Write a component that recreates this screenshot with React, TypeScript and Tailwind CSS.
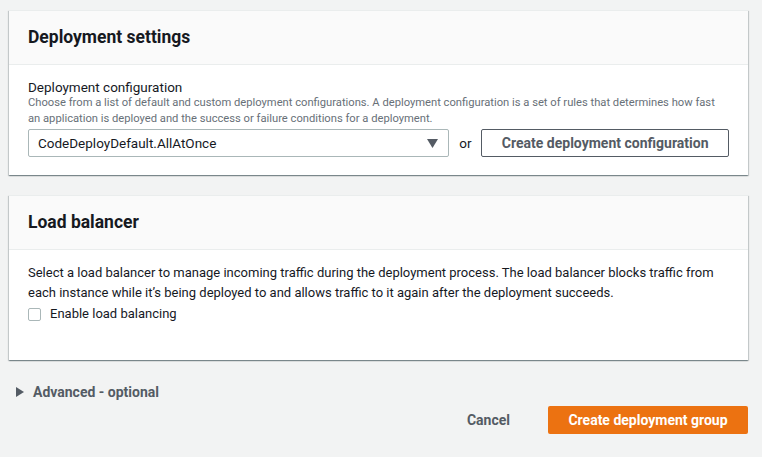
import React from "react";

function Card({ title, children, bodyClass }: { title: string; children: React.ReactNode; bodyClass: string }) {
  return (
    <div className="bg-white shadow-[0_1px_1px_0_rgba(0,28,36,0.3),1px_1px_1px_0_rgba(0,28,36,0.15),-1px_1px_1px_0_rgba(0,28,36,0.15)] border-t border-[#eaeded]">
      <div className="h-[54px] bg-[#fafafa] border-b border-[#eaeded] px-[19px] flex items-center">
        <h2 className="text-[17.5px] font-bold text-[#16191f]">{title}</h2>
      </div>
      <div className={bodyClass}>{children}</div>
    </div>
  );
}

export default function App() {
  return (
    <div className="min-h-[457px] bg-[#f2f3f3] pt-[10px] pl-[9px] pr-[14px] text-[#16191f] font-['Roboto','Liberation_Sans',Arial,sans-serif]">
      <Card title="Deployment settings" bodyClass="px-[19px] pt-[14px] pb-[18px]">
        <div className="text-[13.5px] leading-[16px]">Deployment configuration</div>
        <p className="text-[11.2px] leading-[16px] text-[#687078]">
          Choose from a list of default and custom deployment configurations. A deployment configuration is a set of rules that determines how fast an application is deployed and the success or failure conditions for a deployment.
        </p>
        <div className="mt-[2px] flex items-center">
          <div className="w-[422px] h-[28px] border border-[#aab7b8] rounded-[2px] flex items-center justify-between pl-[9px] pr-[10px] text-[13.5px]">
            <span>CodeDeployDefault.AllAtOnce</span>
            <svg width="11" height="9" viewBox="0 0 11 9">
              <path d="M0 0 L11 0 L5.5 9 Z" fill="#545b64" />
            </svg>
          </div>
          <span className="text-[13.5px] w-[32px] text-center">or</span>
          <button className="w-[248px] h-[28px] border border-[#545b64] rounded-[2px] text-[14px] font-bold text-[#545b64] bg-white">
            Create deployment configuration
          </button>
        </div>
      </Card>

      <div className="h-[20px]" />

      <Card title="Load balancer" bodyClass="px-[19px] pt-[13px] pb-[35px]">
        <p className="text-[13px] leading-[20px]">
          Select a load balancer to manage incoming traffic during the deployment process. The load balancer blocks traffic from each instance while it’s being deployed to and allows traffic to it again after the deployment succeeds.
        </p>
        <label className="flex items-center h-[22px] text-[13px]">
          <span className="w-[13px] h-[13px] border border-[#aab7b8] rounded-[2px] mr-[9px] bg-white" />
          Enable load balancing
        </label>
      </Card>

      <div className="mt-[22px] pl-[7px] flex items-center h-[20px] text-[14px] font-bold text-[#545b64]">
        <svg width="8" height="10" viewBox="0 0 8 10" className="mr-[9px]">
          <path d="M0 0 L8 5 L0 10 Z" fill="#545b64" />
        </svg>
        Advanced - optional
      </div>

      <div className="mt-[4px] flex justify-end items-center">
        <button className="h-[28px] px-[20px] text-[14px] font-bold text-[#545b64] mr-[18px]">Cancel</button>
        <button className="h-[28px] w-[200px] rounded-[2px] bg-[#ec7211] text-white text-[14px] font-bold">
          Create deployment group
        </button>
      </div>
    </div>
  );
}
